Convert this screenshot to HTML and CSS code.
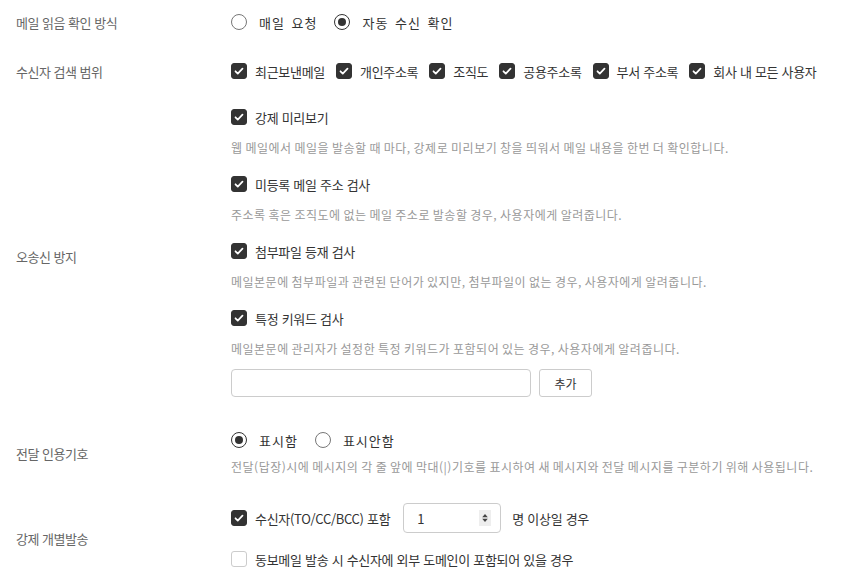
FILE: index.html
```html
<!DOCTYPE html>
<html lang="ko">
<head>
  <meta charset="UTF-8">
  <title>메일 환경설정</title>
  <link rel="stylesheet" href="styles.css">
</head>
<body>

  <div class="settings">

    <!-- 메일 읽음 확인 방식 -->
    <div class="setting-row row-read">
      <div class="setting-label">메일 읽음 확인 방식</div>
      <div class="setting-body">
        <div class="option-line">
          <label class="radio"><span class="dot"></span>매일 요청</label>
          <label class="radio"><span class="dot on"></span>자동 수신 확인</label>
        </div>
      </div>
    </div>

    <!-- 수신자 검색 범위 -->
    <div class="setting-row row-scope">
      <div class="setting-label">수신자 검색 범위</div>
      <div class="setting-body">
        <div class="option-line">
          <label class="check"><span class="box on"><svg viewBox="0 0 16 16"><path d="M4 8.3l2.6 2.6L12 5.4"/></svg></span>최근보낸메일</label>
          <label class="check"><span class="box on"><svg viewBox="0 0 16 16"><path d="M4 8.3l2.6 2.6L12 5.4"/></svg></span>개인주소록</label>
          <label class="check"><span class="box on"><svg viewBox="0 0 16 16"><path d="M4 8.3l2.6 2.6L12 5.4"/></svg></span>조직도</label>
          <label class="check"><span class="box on"><svg viewBox="0 0 16 16"><path d="M4 8.3l2.6 2.6L12 5.4"/></svg></span>공용주소록</label>
          <label class="check"><span class="box on"><svg viewBox="0 0 16 16"><path d="M4 8.3l2.6 2.6L12 5.4"/></svg></span>부서 주소록</label>
          <label class="check"><span class="box on"><svg viewBox="0 0 16 16"><path d="M4 8.3l2.6 2.6L12 5.4"/></svg></span>회사 내 모든 사용자</label>
        </div>
      </div>
    </div>

    <!-- 오송신 방지 -->
    <div class="setting-row row-guard">
      <div class="setting-label">오송신 방지</div>
      <div class="setting-body">
        <div class="option-item">
          <label class="check"><span class="box on"><svg viewBox="0 0 16 16"><path d="M4 8.3l2.6 2.6L12 5.4"/></svg></span>강제 미리보기</label>
          <p class="desc">웹 메일에서 메일을 발송할 때 마다, 강제로 미리보기 창을 띄워서 메일 내용을 한번 더 확인합니다.</p>
        </div>
        <div class="option-item">
          <label class="check"><span class="box on"><svg viewBox="0 0 16 16"><path d="M4 8.3l2.6 2.6L12 5.4"/></svg></span>미등록 메일 주소 검사</label>
          <p class="desc">주소록 혹은 조직도에 없는 메일 주소로 발송할 경우, 사용자에게 알려줍니다.</p>
        </div>
        <div class="option-item">
          <label class="check"><span class="box on"><svg viewBox="0 0 16 16"><path d="M4 8.3l2.6 2.6L12 5.4"/></svg></span>첨부파일 등재 검사</label>
          <p class="desc">메일본문에 첨부파일과 관련된 단어가 있지만, 첨부파일이 없는 경우, 사용자에게 알려줍니다.</p>
        </div>
        <div class="option-item">
          <label class="check"><span class="box on"><svg viewBox="0 0 16 16"><path d="M4 8.3l2.6 2.6L12 5.4"/></svg></span>특정 키워드 검사</label>
          <p class="desc">메일본문에 관리자가 설정한 특정 키워드가 포함되어 있는 경우, 사용자에게 알려줍니다.</p>
        </div>
        <div class="keyword-add">
          <input type="text" class="text-input">
          <button class="btn">추가</button>
        </div>
      </div>
    </div>

    <!-- 전달 인용기호 -->
    <div class="setting-row row-quote">
      <div class="setting-label">전달 인용기호</div>
      <div class="setting-body">
        <div class="option-line">
          <label class="radio"><span class="dot on"></span>표시함</label>
          <label class="radio"><span class="dot"></span>표시안함</label>
        </div>
        <p class="desc quote-desc">전달(답장)시에 메시지의 각 줄 앞에 막대(|)기호를 표시하여 새 메시지와 전달 메시지를 구분하기 위해 사용됩니다.</p>
      </div>
    </div>

    <!-- 강제 개별발송 -->
    <div class="setting-row row-split">
      <div class="setting-label">강제 개별발송</div>
      <div class="setting-body">
        <div class="option-line">
          <label class="check"><span class="box on"><svg viewBox="0 0 16 16"><path d="M4 8.3l2.6 2.6L12 5.4"/></svg></span>수신자(TO/CC/BCC) 포함</label>
          <div class="number-input">
            <span>1</span>
            <span class="spin">
              <svg viewBox="0 0 10 14"><path d="M5 2L8.5 6h-7zM5 12L1.5 8h7z"/></svg>
            </span>
          </div>
          <span class="suffix">명 이상일 경우</span>
        </div>
        <div class="option-line domain-line">
          <label class="check"><span class="box"></span>동보메일 발송 시 수신자에 외부 도메인이 포함되어 있을 경우</label>
        </div>
      </div>
    </div>

  </div>

</body>
</html>
```

FILE: styles.css
```css
/* Basic reset */
* {
  margin: 0;
  padding: 0;
  box-sizing: border-box;
}

body {
  background-color: #ffffff;
  font-family: "Noto Sans CJK KR", "Noto Sans", sans-serif;
  font-size: 13px;
  color: #333;
}

.settings {
  padding: 12px 0 0 16px;
}

.setting-row {
  display: grid;
  grid-template-columns: 215px 1fr;
  align-items: center;
  margin-bottom: 29px;
}

.row-scope {
  margin-bottom: 26px;
}

.row-guard {
  margin-bottom: 33px;
}

.row-quote {
  margin-bottom: 32px;
}

.setting-label {
  color: #666;
  letter-spacing: -0.5px;
}

.row-guard .setting-label {
  padding-top: 8px;
}

.option-line {
  display: flex;
  align-items: center;
  height: 20px;
}

/* Radio buttons */
.radio {
  display: inline-flex;
  align-items: center;
  margin-right: 17px;
  letter-spacing: 1px;
  word-spacing: 2px;
}

.dot {
  width: 16px;
  height: 16px;
  border: 1px solid #777;
  border-radius: 50%;
  margin-right: 12px;
  position: relative;
}

.dot.on {
  border-color: #333;
}

.dot.on::after {
  content: "";
  position: absolute;
  left: 3px;
  top: 3px;
  width: 8px;
  height: 8px;
  border-radius: 50%;
  background-color: #333;
}

/* Checkboxes */
.check {
  display: inline-flex;
  align-items: center;
  margin-right: 11px;
  letter-spacing: -0.3px;
}

.box {
  width: 16px;
  height: 16px;
  border: 1px solid #ccc;
  border-radius: 3px;
  margin-right: 8px;
  display: inline-flex;
}

.box.on {
  background-color: #333;
  border-color: #333;
}

.box svg {
  width: 14px;
  height: 14px;
  fill: none;
  stroke: #fff;
  stroke-width: 2;
  stroke-linecap: round;
  stroke-linejoin: round;
}

.option-item {
  margin-bottom: 17px;
}

.option-item .check {
  height: 20px;
}

.desc {
  font-size: 12px;
  color: #999;
  letter-spacing: 0.5px;
  word-spacing: -1px;
  line-height: 18px;
  margin-top: 11px;
}

.keyword-add {
  display: flex;
  margin-top: -6px;
}

.text-input {
  width: 300px;
  height: 28px;
  border: 1px solid #ccc;
  border-radius: 4px;
  outline: none;
  margin-right: 8px;
}

.btn {
  width: 53px;
  height: 28px;
  border: 1px solid #ccc;
  border-radius: 3px;
  background-color: #fff;
  color: #333;
  font-family: inherit;
  font-size: 12px;
}

.quote-desc {
  margin-top: 8px;
}

.number-input {
  width: 98px;
  height: 30px;
  border: 1px solid #ccc;
  border-radius: 4px;
  display: flex;
  align-items: center;
  justify-content: space-between;
  padding: 0 9px 0 13px;
  margin: 0 11px 0 2px;
}

.spin {
  width: 12px;
  height: 16px;
  background-color: #eee;
  display: inline-flex;
  align-items: center;
  justify-content: center;
}

.spin svg {
  width: 8px;
  height: 12px;
  fill: #444;
}

.suffix {
  letter-spacing: -0.3px;
}

.domain-line {
  margin-top: 21px;
}
```
